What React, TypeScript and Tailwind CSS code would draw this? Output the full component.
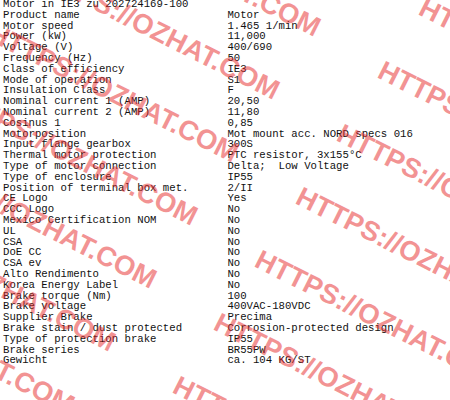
import React from "react";

const rows: [string, string][] = [
  ["Motor in IE3 zu 202724169-100", ""],
  ["Product name", "Motor"],
  ["Motor speed", "1.465 1/min"],
  ["Power (kW)", "11,000"],
  ["Voltage (V)", "400/690"],
  ["Frequency (Hz)", "50"],
  ["Class of efficiency", "IE3"],
  ["Mode of operation", "S1"],
  ["Insulation Class", "F"],
  ["Nominal current 1 (AMP)", "20,50"],
  ["Nominal current 2 (AMP)", "11,80"],
  ["Cosinus 1", "0,85"],
  ["Motorposition", "Mot mount acc. NORD specs 016"],
  ["Input flange gearbox", "300S"],
  ["Thermal motor protection", "PTC resistor, 3x155°C"],
  ["Type of motor connection", "Delta;  Low Voltage"],
  ["Type of enclosure", "IP55"],
  ["Position of terminal box met.", "2/II"],
  ["CE Logo", "Yes"],
  ["CCC Logo", "No"],
  ["Mexico Certification NOM", "No"],
  ["UL", "No"],
  ["CSA", "No"],
  ["DoE CC", "No"],
  ["CSA ev", "No"],
  ["Alto Rendimento", "No"],
  ["Korea Energy Label", "No"],
  ["Brake torque (Nm)", "100"],
  ["Brake voltage", "400VAC-180VDC"],
  ["Supplier Brake", "Precima"],
  ["Brake stain / dust protected", "Corrosion-protected design"],
  ["Type of protection brake", "IP55"],
  ["Brake series", "BR55PW"],
  ["Gewicht", "ca. 104 KG/ST"],
];

const O0 = [335, 140];
const A = [308, 164];
const B = [-41, 63];

const marks: [number, number][] = [];
for (let k = -3; k <= 6; k++) {
  for (let m = -1; m <= 0; m++) {
    const x = O0[0] + k * B[0] + m * A[0];
    const y = O0[1] + k * B[1] + m * A[1];
    const ex = x + 281 * 0.893;
    const ey = y + 281 * 0.449;
    if (x < 455 && ex > -10 && ey > -5 && y < 425) marks.push([x, y]);
  }
}

export default function App() {
  return (
    <div className="relative w-[450px] h-[400px] overflow-hidden bg-white">
      <div className="mt-[-1px] pl-[3px] font-['Liberation_Mono','Courier_New',monospace] text-[10.67px] leading-[10.79px] text-[#111] whitespace-pre">
        {rows.map(([l, v], i) => (
          <div key={i} className="grid grid-cols-[224.4px_1fr]">
            <span>{l}</span>
            <span>{v}</span>
          </div>
        ))}
      </div>
      <svg
        className="pointer-events-none absolute inset-0"
        width="450"
        height="400"
        viewBox="0 0 450 400"
      >
        {marks.map(([x, y], i) => (
          <text
            key={i}
            x={0}
            y={0}
            transform={`translate(${x} ${y}) rotate(26.7)`}
            fontFamily="'Liberation Sans', Arial, sans-serif"
            fontWeight="bold"
            fontSize="27.5"
            fill="rgba(230,40,40,0.5)"
          >
            HTTPS://OZHAT.COM
          </text>
        ))}
      </svg>
    </div>
  );
}
